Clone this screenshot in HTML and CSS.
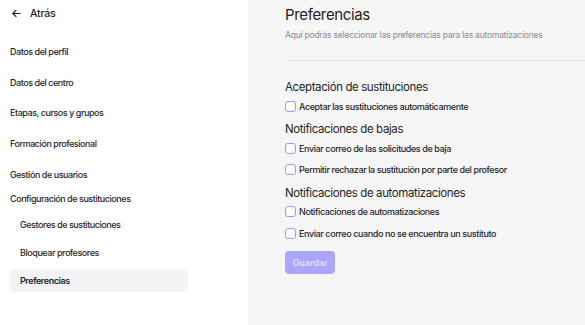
FILE: index.html
```html
<!DOCTYPE html>
<html lang="es">
<head>
    <meta charset="UTF-8">
    <title>Preferencias</title>
    <link rel="stylesheet" href="styles.css">
</head>
<body>
<div class="layout">
    <aside class="sidebar">
        <a class="back" href="#">
            <svg width="11" height="11" viewBox="0 0 24 24" fill="none" stroke="#222" stroke-width="2.4" stroke-linecap="round" stroke-linejoin="round"><path d="M20 12H4"/><path d="M11 5l-7 7 7 7"/></svg>
            <span>Atrás</span>
        </a>
        <ul class="menu">
            <li class="item">Datos del perfil</li>
            <li class="item">Datos del centro</li>
            <li class="item">Etapas, cursos y grupos</li>
            <li class="item">Formación profesional</li>
            <li class="item">Gestión de usuarios</li>
            <li class="item group">Configuración de sustituciones</li>
            <li class="sub">Gestores de sustituciones</li>
            <li class="sub">Bloquear profesores</li>
            <li class="sub active">Preferencias</li>
        </ul>
    </aside>
    <main class="content">
        <div class="head">
            <h1>Preferencias</h1>
            <p class="desc">Aquí podrás seleccionar las preferencias para las automatizaciones</p>
        </div>
        <section class="block">
            <h2>Aceptación de sustituciones</h2>
            <label class="check"><span class="box"></span>Aceptar las sustituciones automáticamente</label>
        </section>
        <section class="block">
            <h2>Notificaciones de bajas</h2>
            <label class="check"><span class="box"></span>Enviar correo de las solicitudes de baja</label>
            <label class="check"><span class="box"></span>Permitir rechazar la sustitución por parte del profesor</label>
        </section>
        <section class="block">
            <h2>Notificaciones de automatizaciones</h2>
            <label class="check"><span class="box"></span>Notificaciones de automatizaciones</label>
            <label class="check"><span class="box"></span>Enviar correo cuando no se encuentra un sustituto</label>
        </section>
        <button class="save" disabled>Guardar</button>
    </main>
</div>
</body>
</html>
```

FILE: styles.css
```css
* {
    margin: 0;
    padding: 0;
    box-sizing: border-box;
    list-style: none;
}

html, body {
    width: 100%;
    height: 100%;
    font-family: Inter, "Noto Sans", sans-serif;
    color: #1f1f23;
}

.layout {
    display: flex;
    height: 100%;
}

.sidebar {
    width: 248px;
    background-color: #fff;
    padding: 5px 10px 0 10px;
    flex-shrink: 0;
}

.back {
    display: flex;
    align-items: center;
    gap: 8px;
    height: 16px;
    padding-left: 1px;
    color: #1f1f23;
    text-decoration: none;
    font-size: 10.5px;
    font-weight: 500;
    letter-spacing: -0.2px;
}

.menu {
    margin-top: 16px;
    font-size: 9px;
    font-weight: 500;
    letter-spacing: -0.45px;
    color: #26262b;
}

.item {
    height: 30.7px;
    line-height: 30.7px;
}

.group {
    height: 18px;
    line-height: 18px;
    margin-bottom: 5px;
}

.sub {
    width: 178px;
    height: 23px;
    line-height: 23px;
    padding-left: 10px;
    margin-bottom: 5px;
    border-radius: 4px;
}

.active {
    background-color: #f3f4f6;
    font-weight: 600;
}

.content {
    flex-grow: 1;
    background-color: #f6f6f6;
    padding: 5px 0 0 37px;
}

.head {
    border-bottom: 1px solid #e6e6e8;
    padding-bottom: 19px;
    margin-bottom: 18px;
}

h1 {
    font-size: 15px;
    font-weight: 400;
    line-height: 20px;
    letter-spacing: -0.35px;
}

.desc {
    margin-top: 4px;
    font-size: 8.5px;
    color: #8a8a95;
    line-height: 12px;
    letter-spacing: -0.2px;
}

.block {
    margin-bottom: 4px;
}

h2 {
    font-size: 11.5px;
    font-weight: 400;
    line-height: 16px;
    letter-spacing: -0.4px;
    margin-bottom: 0.5px;
}

.check {
    display: flex;
    align-items: center;
    gap: 3px;
    height: 21.5px;
    font-size: 9px;
    font-weight: 500;
    letter-spacing: -0.4px;
    color: #26262b;
}

.box {
    width: 11px;
    height: 11px;
    border: 1.5px solid #9d97f7;
    border-radius: 3px;
    background-color: #fff;
}

.save {
    margin-top: 3px;
    width: 50px;
    height: 23px;
    border: none;
    border-radius: 4px;
    background-color: #aba6fb;
    color: #e6e4ff;
    font-family: Inter, sans-serif;
    font-size: 9px;
    font-weight: 500;
}
```
